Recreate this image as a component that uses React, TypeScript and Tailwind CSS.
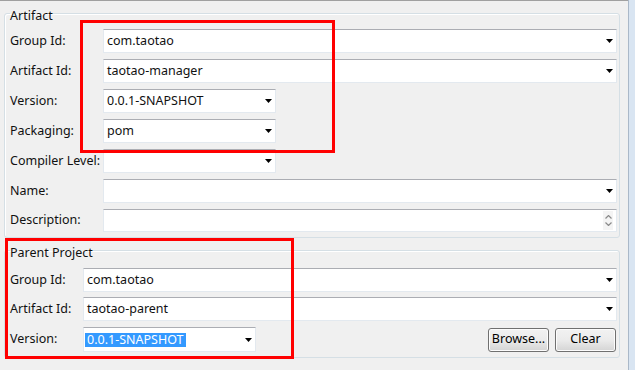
import React from "react";

function Arrow() {
  return (
    <svg width="7" height="4" viewBox="0 0 7 4" className="ml-auto mr-[3px] shrink-0">
      <polygon points="0,0 7,0 3.5,4" fill="#000" />
    </svg>
  );
}

function Combo({ text, w, selected }: { text?: string; w?: string; selected?: boolean }) {
  return (
    <div
      className={
        "h-full bg-white border border-[#e3e9ef] border-t-[#abadb3] flex items-center " +
        (w ? w : "flex-1")
      }
    >
      {selected ? (
        <span className="ml-[1px] px-[2px] bg-[#3399ff] text-white leading-[14px] inline-block">{text}</span>
      ) : (
        <span className="pl-[3px]">{text}</span>
      )}
      <Arrow />
    </div>
  );
}

function Row({ label, lw, children, h = "h-[24px]" }: { label: string; lw: string; children: React.ReactNode; h?: string }) {
  return (
    <div className={"flex items-center " + h}>
      <div className={"shrink-0 " + lw}>{label}</div>
      {children}
    </div>
  );
}

function Button({ label }: { label: string }) {
  return (
    <div className="w-[61px] h-[24px] rounded-[3px] border border-[#707070] bg-gradient-to-b from-[#f2f2f2] via-[#ebebeb] to-[#d4d4d4] shadow-[inset_0_0_0_1px_#fcfcfc] flex items-center justify-center text-black">
      {label}
    </div>
  );
}

export default function App() {
  return (
    <div className="w-[635px] h-[370px] bg-[#f0f0f0] flex overflow-hidden relative font-['Noto_Sans',sans-serif] text-[12.5px] text-[#111]">
      <div className="w-[628px] flex flex-col border-t border-[#a0a0a0]">
        <fieldset className="mt-[3px] ml-[4px] w-[616px] border border-[#d5dfe5] rounded-[3px] shadow-[inset_1px_1px_0_#fff] pl-[5px] pr-[2px] pt-[6px] pb-[5px] flex flex-col gap-[6px]">
          <legend className="pt-[5px] leading-[14px]">Artifact</legend>
          <Row label="Group Id:" lw="w-[93px]"><Combo text="com.taotao" /></Row>
          <Row label="Artifact Id:" lw="w-[93px]"><Combo text="taotao-manager" /></Row>
          <Row label="Version:" lw="w-[93px]"><Combo text="0.0.1-SNAPSHOT" w="w-[173px]" /></Row>
          <Row label="Packaging:" lw="w-[93px]"><Combo text="pom" w="w-[173px]" /></Row>
          <Row label="Compiler Level:" lw="w-[93px]"><Combo w="w-[173px]" /></Row>
          <Row label="Name:" lw="w-[93px]"><Combo /></Row>
          <Row label="Description:" lw="w-[93px]" h="h-[23px]">
            <div className="h-full flex-1 bg-white border border-[#e3e9ef] border-t-[#abadb3] flex items-center">
              <div className="ml-auto mr-[3px] w-[10px] h-[19px] flex flex-col items-center justify-center gap-[3px] bg-[#f4f4f4]">
                <svg width="7" height="4" viewBox="0 0 7 4"><polyline points="0.5,3.5 3.5,0.5 6.5,3.5" fill="none" stroke="#8a8a8a" strokeWidth="1.2" /></svg>
                <svg width="7" height="4" viewBox="0 0 7 4"><polyline points="0.5,0.5 3.5,3.5 6.5,0.5" fill="none" stroke="#8a8a8a" strokeWidth="1.2" /></svg>
              </div>
            </div>
          </Row>
        </fieldset>
        <fieldset className="mt-[3px] ml-[4px] w-[616px] border border-[#d5dfe5] rounded-[3px] shadow-[inset_1px_1px_0_#fff] pl-[5px] pr-[2px] pt-[8px] pb-[5px] flex flex-col">
          <legend className="pt-[5px] leading-[14px]">Parent Project</legend>
          <Row label="Group Id:" lw="w-[73px]"><Combo text="com.taotao" /></Row>
          <div className="h-[5px]" />
          <Row label="Artifact Id:" lw="w-[73px]"><Combo text="taotao-parent" /></Row>
          <div className="h-[6px]" />
          <Row label="Version:" lw="w-[73px]" h="h-[25px]">
            <Combo text="0.0.1-SNAPSHOT" w="w-[173px]" selected />
            <div className="ml-auto mr-[1px] flex gap-[6px] h-[24px]">
              <Button label="Browse..." />
              <Button label="Clear" />
            </div>
          </Row>
        </fieldset>
      </div>
      <div className="flex-1 border-l border-[#aab8c8] bg-[#d9e5f2]" />
      <div className="absolute left-[80px] top-[20px] w-[255px] h-[133px] border-[3px] border-[#f00] pointer-events-none" />
      <div className="absolute left-[5px] top-[238px] w-[289px] h-[121px] border-[3px] border-[#f00] pointer-events-none" />
    </div>
  );
}
